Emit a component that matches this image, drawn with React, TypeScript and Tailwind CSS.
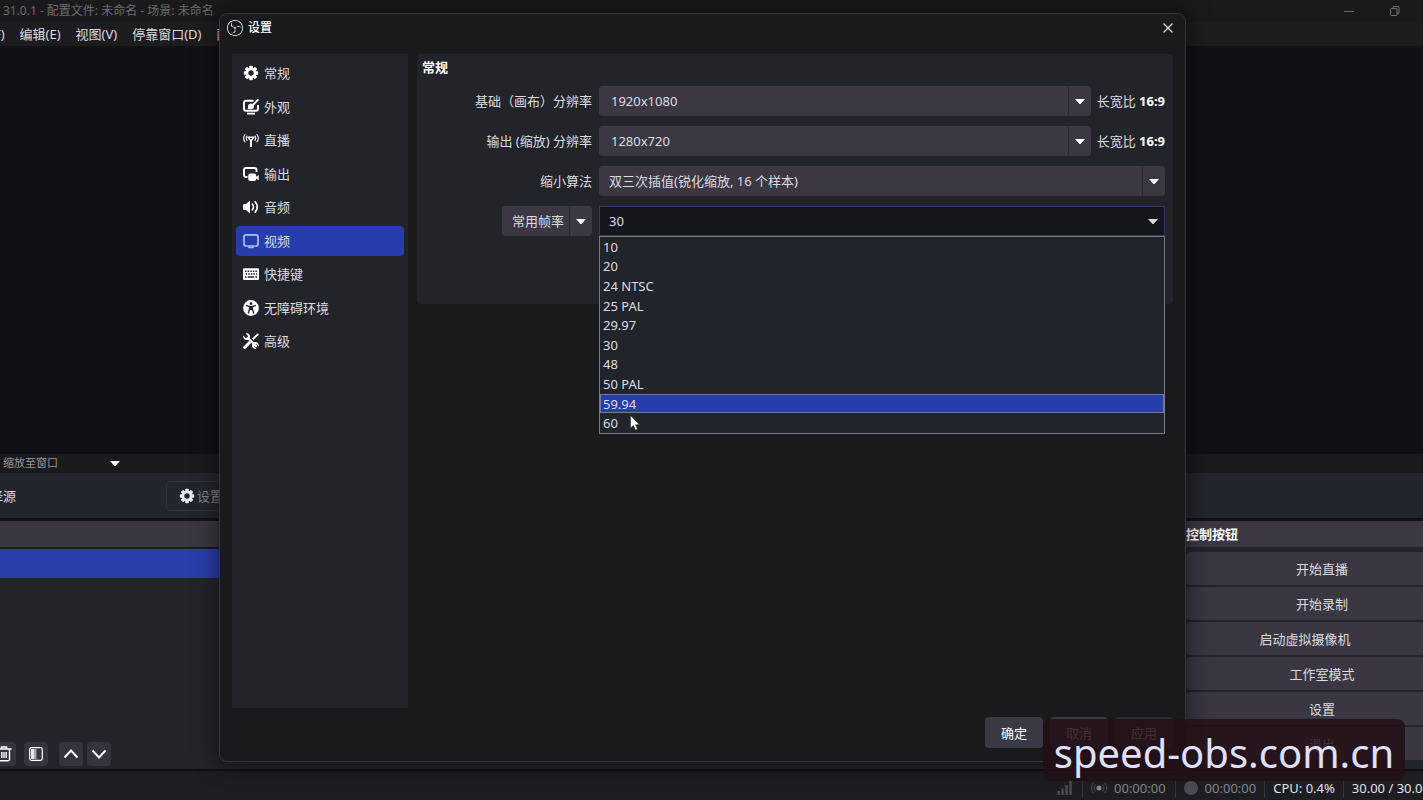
import { FC, ReactNode, useState } from "react";
import { SiObsstudio } from "react-icons/si";

interface IconProps {
  className?: string;
}

interface NavItem {
  label: string;
  icon: FC<IconProps>;
}

const Svg: FC<{ className?: string; children: ReactNode }> = ({ className = "size-4", children }) => (
  <svg viewBox="0 0 16 16" fill="none" aria-hidden="true" className={className}>
    {children}
  </svg>
);

const GearIcon: FC<IconProps> = ({ className }) => (
  <Svg className={className}>
    <g fill="currentColor">
      <rect x="6.2" y="0.8" width="3.6" height="14.4" rx="0.8" />
      <rect x="6.2" y="0.8" width="3.6" height="14.4" rx="0.8" transform="rotate(45 8 8)" />
      <rect x="6.2" y="0.8" width="3.6" height="14.4" rx="0.8" transform="rotate(90 8 8)" />
      <rect x="6.2" y="0.8" width="3.6" height="14.4" rx="0.8" transform="rotate(135 8 8)" />
      <circle cx="8" cy="8" r="5.6" />
    </g>
    <circle cx="8" cy="8" r="2.7" fill="#22242a" />
  </Svg>
);

const AppearanceIcon: FC<IconProps> = ({ className }) => (
  <Svg className={className}>
    <path d="M10.5 1.7H3A2 2 0 0 0 1 3.7v6.1a2 2 0 0 0 2 2h10a2 2 0 0 0 2-2V6" stroke="currentColor" strokeWidth="1.9" />
    <path d="M4 14.6h8" stroke="currentColor" strokeWidth="1.8" />
    <path d="M15.4.3 9.8 6.2" stroke="currentColor" strokeWidth="1.9" />
    <path d="M4.6 9.9c.6-.6.3-1.4.4-2.6.2-1.8 1.5-2.9 3-2.9 1.8 0 3.1 1.2 3.1 2.8 0 1.8-1.4 3-3.3 3-1.3 0-2.3-.1-3.2-.3z" fill="currentColor" />
  </Svg>
);

const StreamIcon: FC<IconProps> = ({ className }) => (
  <Svg className={className}>
    <g stroke="currentColor" strokeLinecap="round">
      <path d="M2 2.6C.4 4.7.4 7.8 2 9.8M14 2.6c1.6 2.1 1.6 5.2 0 7.2" strokeWidth="1.1" />
      <path d="M4 4c-.9 1.3-.9 3.1 0 4.4M12 4c.9 1.3.9 3.1 0 4.4" strokeWidth="1.1" />
    </g>
    <path d="M5 5.2h6L8 8.900z" stroke="currentColor" strokeWidth="1.4" strokeLinejoin="round" />
    <path d="M8 8.5V15" stroke="currentColor" strokeWidth="1.9" />
  </Svg>
);

const OutputIcon: FC<IconProps> = ({ className }) => (
  <Svg className={className}>
    <path d="M4.5 11H3a2 2 0 0 1-2-2V4a2 2 0 0 1 2-2h8.5a2 2 0 0 1 2 2v2" stroke="currentColor" strokeWidth="1.9" />
    <rect x="5.2" y="7.5" width="8" height="7.5" rx="2.2" fill="currentColor" />
    <path d="m12.5 11.2 3.2-2.2v5.2l-3.2-2z" fill="currentColor" />
  </Svg>
);

const AudioIcon: FC<IconProps> = ({ className }) => (
  <Svg className={className}>
    <path d="M0 6.2A1.2 1.2 0 0 1 1.2 5H3l4-3.6v13.2L3 11H1.2A1.2 1.2 0 0 1 0 9.8z" fill="currentColor" />
    <path d="M9.4 5.2c1.3 1.5 1.3 4.1 0 5.6M12.2 2.800c2.7 2.9 2.7 7.5 0 10.4" stroke="currentColor" strokeWidth="1.7" strokeLinecap="round" />
  </Svg>
);

const VideoIcon: FC<IconProps> = ({ className }) => (
  <Svg className={className}>
    <rect x="1" y="1.8" width="14" height="11.2" rx="2" stroke="#a9bdf7" strokeWidth="1.7" />
    <path d="M5.2 14.5h5.6" stroke="#a9bdf7" strokeWidth="1.5" />
  </Svg>
);

const HotkeyIcon: FC<IconProps> = ({ className }) => (
  <Svg className={className}>
    <rect x="0" y="2.3" width="16" height="11.7" rx="1.2" fill="currentColor" />
    <path d="M2 5.3h12M2.600 8.1h11.5" stroke="#22242a" strokeWidth="1.5" strokeDasharray="1.5 1.1" />
    <path d="M2 11h1.6M4.8 11h6.4M12.4 11H14" stroke="#22242a" strokeWidth="1.4" />
  </Svg>
);

const AccessibilityIcon: FC<IconProps> = ({ className }) => (
  <Svg className={className}>
    <circle cx="8" cy="8" r="7.9" fill="currentColor" />
    <circle cx="8" cy="3.7" r="1.4" fill="#22242a" />
    <path d="M3.5 5.7 6.6 6.6v2.2L5.4 13M12.5 5.7 9.4 6.6v2.2l1.2 4.2" stroke="#22242a" strokeWidth="1.3" strokeLinecap="round" />
    <path d="M6.3 6h3.4v4H6.3z" fill="#22242a" />
  </Svg>
);

const AdvancedIcon: FC<IconProps> = ({ className }) => (
  <Svg className={className}>
    <path d="m5.2 5.2 7.8 7.9" stroke="currentColor" strokeWidth="2.3" strokeLinecap="round" />
    <path d="M.4 2.6 2.7 4.9 4.6 4.6 4.9 2.7 2.6.4C5-.4 7.4 1.3 7 4.5L4.5 7C1.5 7.4-.4 5.1.4 2.6z" fill="currentColor" />
    <path d="M15.6 13.4 13.3 11.1 11.4 11.4 11.1 13.3 13.4 15.6C11 16.4 8.6 14.7 9 11.5L11.5 9c3-.4 4.9 1.9 4.1 4.4z" fill="currentColor" />
    <path d="m15.3 1-5.6 5.2" stroke="currentColor" strokeWidth="2" />
    <path d="m6.3 9.8-4.6 4.7" stroke="currentColor" strokeWidth="3" strokeLinecap="round" />
  </Svg>
);

const Caret: FC<IconProps> = ({ className = "w-[10px] h-[5px]" }) => (
  <svg viewBox="0 0 10 5" aria-hidden="true" className={className}>
    <path d="M0 0h10L5.5 5h-1z" fill="currentColor" />
  </svg>
);

const navItems: NavItem[] = [
  { label: "常规", icon: GearIcon },
  { label: "外观", icon: AppearanceIcon },
  { label: "直播", icon: StreamIcon },
  { label: "输出", icon: OutputIcon },
  { label: "音频", icon: AudioIcon },
  { label: "视频", icon: VideoIcon },
  { label: "快捷键", icon: HotkeyIcon },
  { label: "无障碍环境", icon: AccessibilityIcon },
  { label: "高级", icon: AdvancedIcon },
];

const fpsOptions = ["10", "20", "24 NTSC", "25 PAL", "29.97", "30", "48", "50 PAL", "59.94", "60"];

interface SelectProps {
  id: string;
  value: string;
  wide?: boolean;
}

const SelectBox: FC<SelectProps> = ({ id, value, wide }) => (
  <div className="relative flex-1 min-w-0">
    <select
      id={id}
      className={`block w-full h-[30px] appearance-none rounded-sm bg-[#3b3843] text-[#dcdce2] outline-none ${
        wide ? "pl-2.5" : "pl-3"
      }`}
    >
      <option>{value}</option>
    </select>
    <span className="absolute inset-y-0 right-0 w-[23px] flex items-center justify-center border-l border-[#2a2a34] text-white pointer-events-none">
      <Caret />
    </span>
  </div>
);

const FormLabel: FC<{ htmlFor: string; children: ReactNode }> = ({ htmlFor, children }) => (
  <label htmlFor={htmlFor} className="w-[170px] shrink-0 text-right">
    {children}
  </label>
);

const AspectRatio: FC = () => (
  <span className="pl-1.5 shrink-0">
    长宽比 <b className="text-white">16:9</b>
  </span>
);

const FpsField: FC = () => {
  const [highlighted, setHighlighted] = useState("59.94");

  return (
    <div className="relative flex-1 min-w-0">
      <button
        type="button"
        aria-haspopup="listbox"
        aria-expanded="true"
        className="w-full h-[30px] flex items-center justify-between pl-[9px] pr-1.5 border border-[#34366f] bg-[#15171c]"
      >
        30
        <Caret />
      </button>

      {/* Open list */}
      <ul
        role="listbox"
        aria-label="帧率"
        className="absolute z-10 top-[30px] inset-x-0 h-[198px] flex flex-col border border-[#777985] bg-[#22242b] leading-4"
      >
        {fpsOptions.map((option) => (
          <li
            key={option}
            role="option"
            aria-selected={option === highlighted}
            onMouseEnter={() => setHighlighted(option)}
            className={`flex-1 min-h-0 flex items-center px-0.5 border ${
              option === highlighted ? "border-[#77799a] bg-[#283dac]" : "border-transparent"
            }`}
          >
            {option}
          </li>
        ))}
      </ul>

      {/* Pointer */}
      <svg viewBox="0 0 10 16" aria-hidden="true" className="absolute z-20 left-[31px] top-[209px] w-[10px] h-4">
        <path d="M.5.5V13l2.9-2.6 1.900 4.5 2.2-.9-1.9-4.300h3.900z" fill="#fff" stroke="#222" strokeWidth=".5" />
      </svg>
    </div>
  );
};

const SettingsDialog: FC = () => (
  <section
    role="dialog"
    aria-label="设置"
    className="absolute top-[13px] bottom-[38px] left-[219px] right-[237px] flex flex-col px-3 rounded-lg border border-[#343439] bg-[#191a1c] shadow-[0_0_24px_rgba(0,0,0,0.6)]"
  >
    <header className="h-7 -mx-[5px] mb-3 shrink-0 flex items-center gap-[5px] text-xs font-medium text-white">
      <SiObsstudio className="size-4" />
      设置
      <button type="button" aria-label="关闭" className="ml-auto mr-[5px]">
        <svg viewBox="0 0 10 10" aria-hidden="true" className="size-[10px]">
          <path d="m.5.5 9 9m0-9-9 9" stroke="#e0e0e0" strokeWidth="1.2" />
        </svg>
      </button>
    </header>

    <div className="flex-1 min-h-0 flex gap-[9px]">
      <nav className="w-[176px] shrink-0 px-1 pt-1 bg-[#22242a]">
        <ul className="h-[298px] flex flex-col justify-between">
          {navItems.map(({ label, icon: Icon }) => (
            <li key={label}>
              <button
                type="button"
                className={`w-full h-[30px] flex items-center gap-[5px] pl-[7px] rounded-sm ${
                  label === "视频" ? "bg-[#283dac]" : ""
                }`}
              >
                <Icon className="size-4 shrink-0 text-white" />
                {label}
              </button>
            </li>
          ))}
        </ul>
      </nav>

      <form className="flex-1 min-w-0 self-start h-[250px] pl-[5px] pr-2 pt-[3px] rounded-sm bg-[#22242a]">
        <h2 className="h-5 mb-[9px] leading-5 font-bold text-white">常规</h2>

        <div className="flex flex-col gap-2.5">
          <div className="flex items-center">
            <FormLabel htmlFor="base">基础（画布）分辨率</FormLabel>
            <div className="flex-1 flex items-center pl-[7px]">
              <SelectBox id="base" value="1920x1080" />
              <AspectRatio />
            </div>
          </div>

          <div className="flex items-center">
            <FormLabel htmlFor="output">输出 (缩放) 分辨率</FormLabel>
            <div className="flex-1 flex items-center pl-[7px]">
              <SelectBox id="output" value="1280x720" />
              <AspectRatio />
            </div>
          </div>

          <div className="flex items-center gap-[7px]">
            <FormLabel htmlFor="filter">缩小算法</FormLabel>
            <SelectBox id="filter" value="双三次插值(锐化缩放, 16 个样本)" wide />
          </div>

          <div className="flex items-center gap-[7px]">
            <div className="w-[170px] shrink-0 flex justify-end">
              <div className="w-[90px] flex">
                <SelectBox id="fps-type" value="常用帧率" wide />
              </div>
              <label htmlFor="fps-type" className="sr-only">
                常用帧率
              </label>
            </div>
            <FpsField />
          </div>
        </div>
      </form>
    </div>

    <footer className="h-[53px] shrink-0 flex gap-[7px] justify-end pt-[9px]">
      <button type="button" className="w-[58px] h-[31px] rounded-sm bg-[#3a3a44] text-white">
        确定
      </button>
      <button type="button" className="w-[58px] h-[31px] rounded-sm bg-[#3a3a44]">
        取消
      </button>
      <button type="button" className="w-[58px] h-[31px] rounded-sm bg-[#2c2c34]">
        应用
      </button>
    </footer>
  </section>
);

const ToolButton: FC<{ label: string; children: ReactNode }> = ({ label, children }) => (
  <button type="button" aria-label={label} className="size-6 flex items-center justify-center rounded-sm bg-[#34343f] text-white">
    {children}
  </button>
);

const SourcesDock: FC = () => (
  <div className="flex-1 flex flex-col bg-[#22242a]">
    <div className="h-[26px] bg-[#3b3740]" />
    <div className="h-[31px] border-t-2 border-[#191a22] bg-[#2a3eab]" />

    <div className="mt-auto mb-[3px] flex items-center">
      <div className="flex gap-2 -ml-2">
        <ToolButton label="移除源">
          <Svg>
            <path d="M.5 3h15M5.5 3V1h5v2M2.5 3v10.5a1.2 1.2 0 0 0 1.2 1.2h8.6a1.2 1.2 0 0 0 1.2-1.2V3M5.8 6v6M8 6v6M10.2 6v6" stroke="currentColor" strokeWidth="1.4" />
          </Svg>
        </ToolButton>
        <ToolButton label="属性">
          <Svg>
            <rect x="1.7" y="1.7" width="12.6" height="12.6" rx="1.8" stroke="currentColor" strokeWidth="1.2" />
            <path d="M3 3h5.500v10H3z" fill="#a6a6ae" />
            <path d="M3 3h3v10H3z" fill="#e4e4ea" />
          </Svg>
        </ToolButton>
      </div>
      <div className="flex gap-1 ml-[11px]">
        <ToolButton label="上移">
          <Svg>
            <path d="m1.5 11.5 6.5-7 6.5 7" stroke="currentColor" strokeWidth="1.9" />
          </Svg>
        </ToolButton>
        <ToolButton label="下移">
          <Svg>
            <path d="m1.5 4.5 6.5 7 6.5-7" stroke="currentColor" strokeWidth="1.9" />
          </Svg>
        </ToolButton>
      </div>
    </div>
  </div>
);

const ControlButton: FC<{ children: ReactNode }> = ({ children }) => (
  <button type="button" className="flex-1 h-[33px] rounded-sm bg-[#3a3742]">
    {children}
  </button>
);

const ControlsDock: FC = () => (
  // wider than the visible part, the right edge is cut by the window
  <div className="w-[272px] -mr-[35px] shrink-0 flex flex-col bg-[#22242c]">
    <h2 className="h-[26px] leading-[26px] bg-[#3b3842] font-bold text-white">控制按钮</h2>
    <div className="flex flex-col gap-0.5 pt-[5px]">
      <div className="flex">
        <ControlButton>开始直播</ControlButton>
      </div>
      <div className="flex">
        <ControlButton>开始录制</ControlButton>
      </div>
      <div className="flex gap-0.5">
        <ControlButton>启动虚拟摄像机</ControlButton>
        <button type="button" aria-label="虚拟摄像机设置" className="w-8 flex items-center justify-center bg-[#3a3742]">
          <GearIcon />
        </button>
      </div>
      <div className="flex">
        <ControlButton>工作室模式</ControlButton>
      </div>
      <div className="flex">
        <ControlButton>设置</ControlButton>
      </div>
      <div className="flex">
        <ControlButton>退出</ControlButton>
      </div>
    </div>
  </div>
);

const StatusBar: FC = () => (
  <footer className="h-[31px] shrink-0 flex items-center justify-end border-t-2 border-[#101114] bg-[#1d1d22] pt-1 -mr-8 whitespace-nowrap text-[#85858b]">
    <svg viewBox="0 0 16 14" aria-hidden="true" className="w-4 h-3.5 mr-[9px]">
      <path d="M1.5 14v-4M5.5 14V7.5M9.5 14V4M13.5 14V0" stroke="#4d4c55" strokeWidth="2.4" />
    </svg>
    <span className="flex items-center gap-[7px] border-l border-[#33333a] pl-2 pr-[9px]">
      <Svg>
        <circle cx="8" cy="8" r="2.5" fill="#8a8a90" />
        <path d="M4.5 4.5c-1.8 2-1.8 5 0 7M11.5 4.5c1.8 2 1.8 5 0 7M2 3c-2 3-2 7 0 10M14 3c2 3 2 7 0 10" stroke="#4d4d55" />
      </Svg>
      00:00:00
    </span>
    <span className="flex items-center gap-[7px] border-l border-[#33333a] px-2">
      <span className="size-3.5 rounded-full bg-[#4b4b53]" />
      00:00:00
    </span>
    <span className="border-l border-[#33333a] px-2 text-[#e2e2e6]">CPU: 0.4%</span>
    <span className="border-l border-[#33333a] pl-2 text-[#e2e2e6]">30.00 / 30.00 FPS</span>
  </footer>
);

const App: FC = () => {
  return (
    <main className="relative h-screen flex flex-col overflow-hidden bg-[#121316] font-['Noto_Sans','Noto_Sans_CJK_SC',sans-serif] text-[13px] leading-5 text-[#dcdce0]">
      {/* Title bar */}
      <header className="h-[22px] shrink-0 flex items-center bg-[#1a1a1d] text-xs text-[#6d6c6c]">
        <span className="-ml-6 whitespace-nowrap">OBS 31.0.1 - 配置文件: 未命名 - 场景: 未命名</span>
        <div className="ml-auto mr-[22px] flex gap-[34px]">
          <button type="button" aria-label="最小化">
            <svg viewBox="0 0 12 12" fill="none" stroke="#66666a" aria-hidden="true" className="size-3">
              <path d="M1 6.5h10" />
            </svg>
          </button>
          <button type="button" aria-label="还原">
            <svg viewBox="0 0 12 12" fill="none" stroke="#77777b" aria-hidden="true" className="size-3">
              <rect x="1.5" y="3.5" width="6.5" height="7" rx="1" />
              <path d="M4 3.5V2.500a1 1 0 0 1 1-1h4a1 1 0 0 1 1 1v5a1 1 0 0 1-1 1H8" />
            </svg>
          </button>
        </div>
      </header>

      <nav className="h-6 shrink-0 flex items-center gap-[15px] -ml-9 bg-[#1d1d20] whitespace-nowrap">
        <button type="button">文件(F)</button>
        <button type="button">编辑(E)</button>
        <button type="button">视图(V)</button>
        <button type="button">停靠窗口(D)</button>
        <button type="button">配置文件(P)</button>
      </nav>

      {/* Preview */}
      <div className="flex-1 bg-[#101115]" />

      <div className="h-[18px] shrink-0 flex items-center pl-[3px] bg-[#1b1b1e] text-[11px] text-[#97979b]">
        <button type="button" className="w-[117px] flex items-center justify-between">
          缩放至窗口
          <Caret className="w-[10px] h-[5px] text-white" />
        </button>
      </div>

      <div className="h-[46px] shrink-0 flex items-center border-t border-[#1a1a1e] bg-[#22252b]">
        <span className="w-[202px] -ml-9 whitespace-nowrap">未选择源</span>
        <button type="button" className="w-[90px] h-[30px] flex items-center gap-0.5 pl-3 rounded-sm border border-[#30323a] text-[#85858b]">
          <GearIcon className="size-4 text-[#e6e6ea]" />
          设置
        </button>
      </div>

      <div className="h-[248px] shrink-0 mt-[3px] flex">
        <SourcesDock />
        <ControlsDock />
      </div>

      <StatusBar />

      <SettingsDialog />

      <div className="absolute right-[18px] bottom-[19px] w-[362px] h-[62px] flex items-center justify-center rounded-lg bg-[#230f15]/85 pt-1.5 text-[40px] text-[#dfe0ff]">
        speed-obs.com.cn
      </div>
    </main>
  );
};

export default App;
